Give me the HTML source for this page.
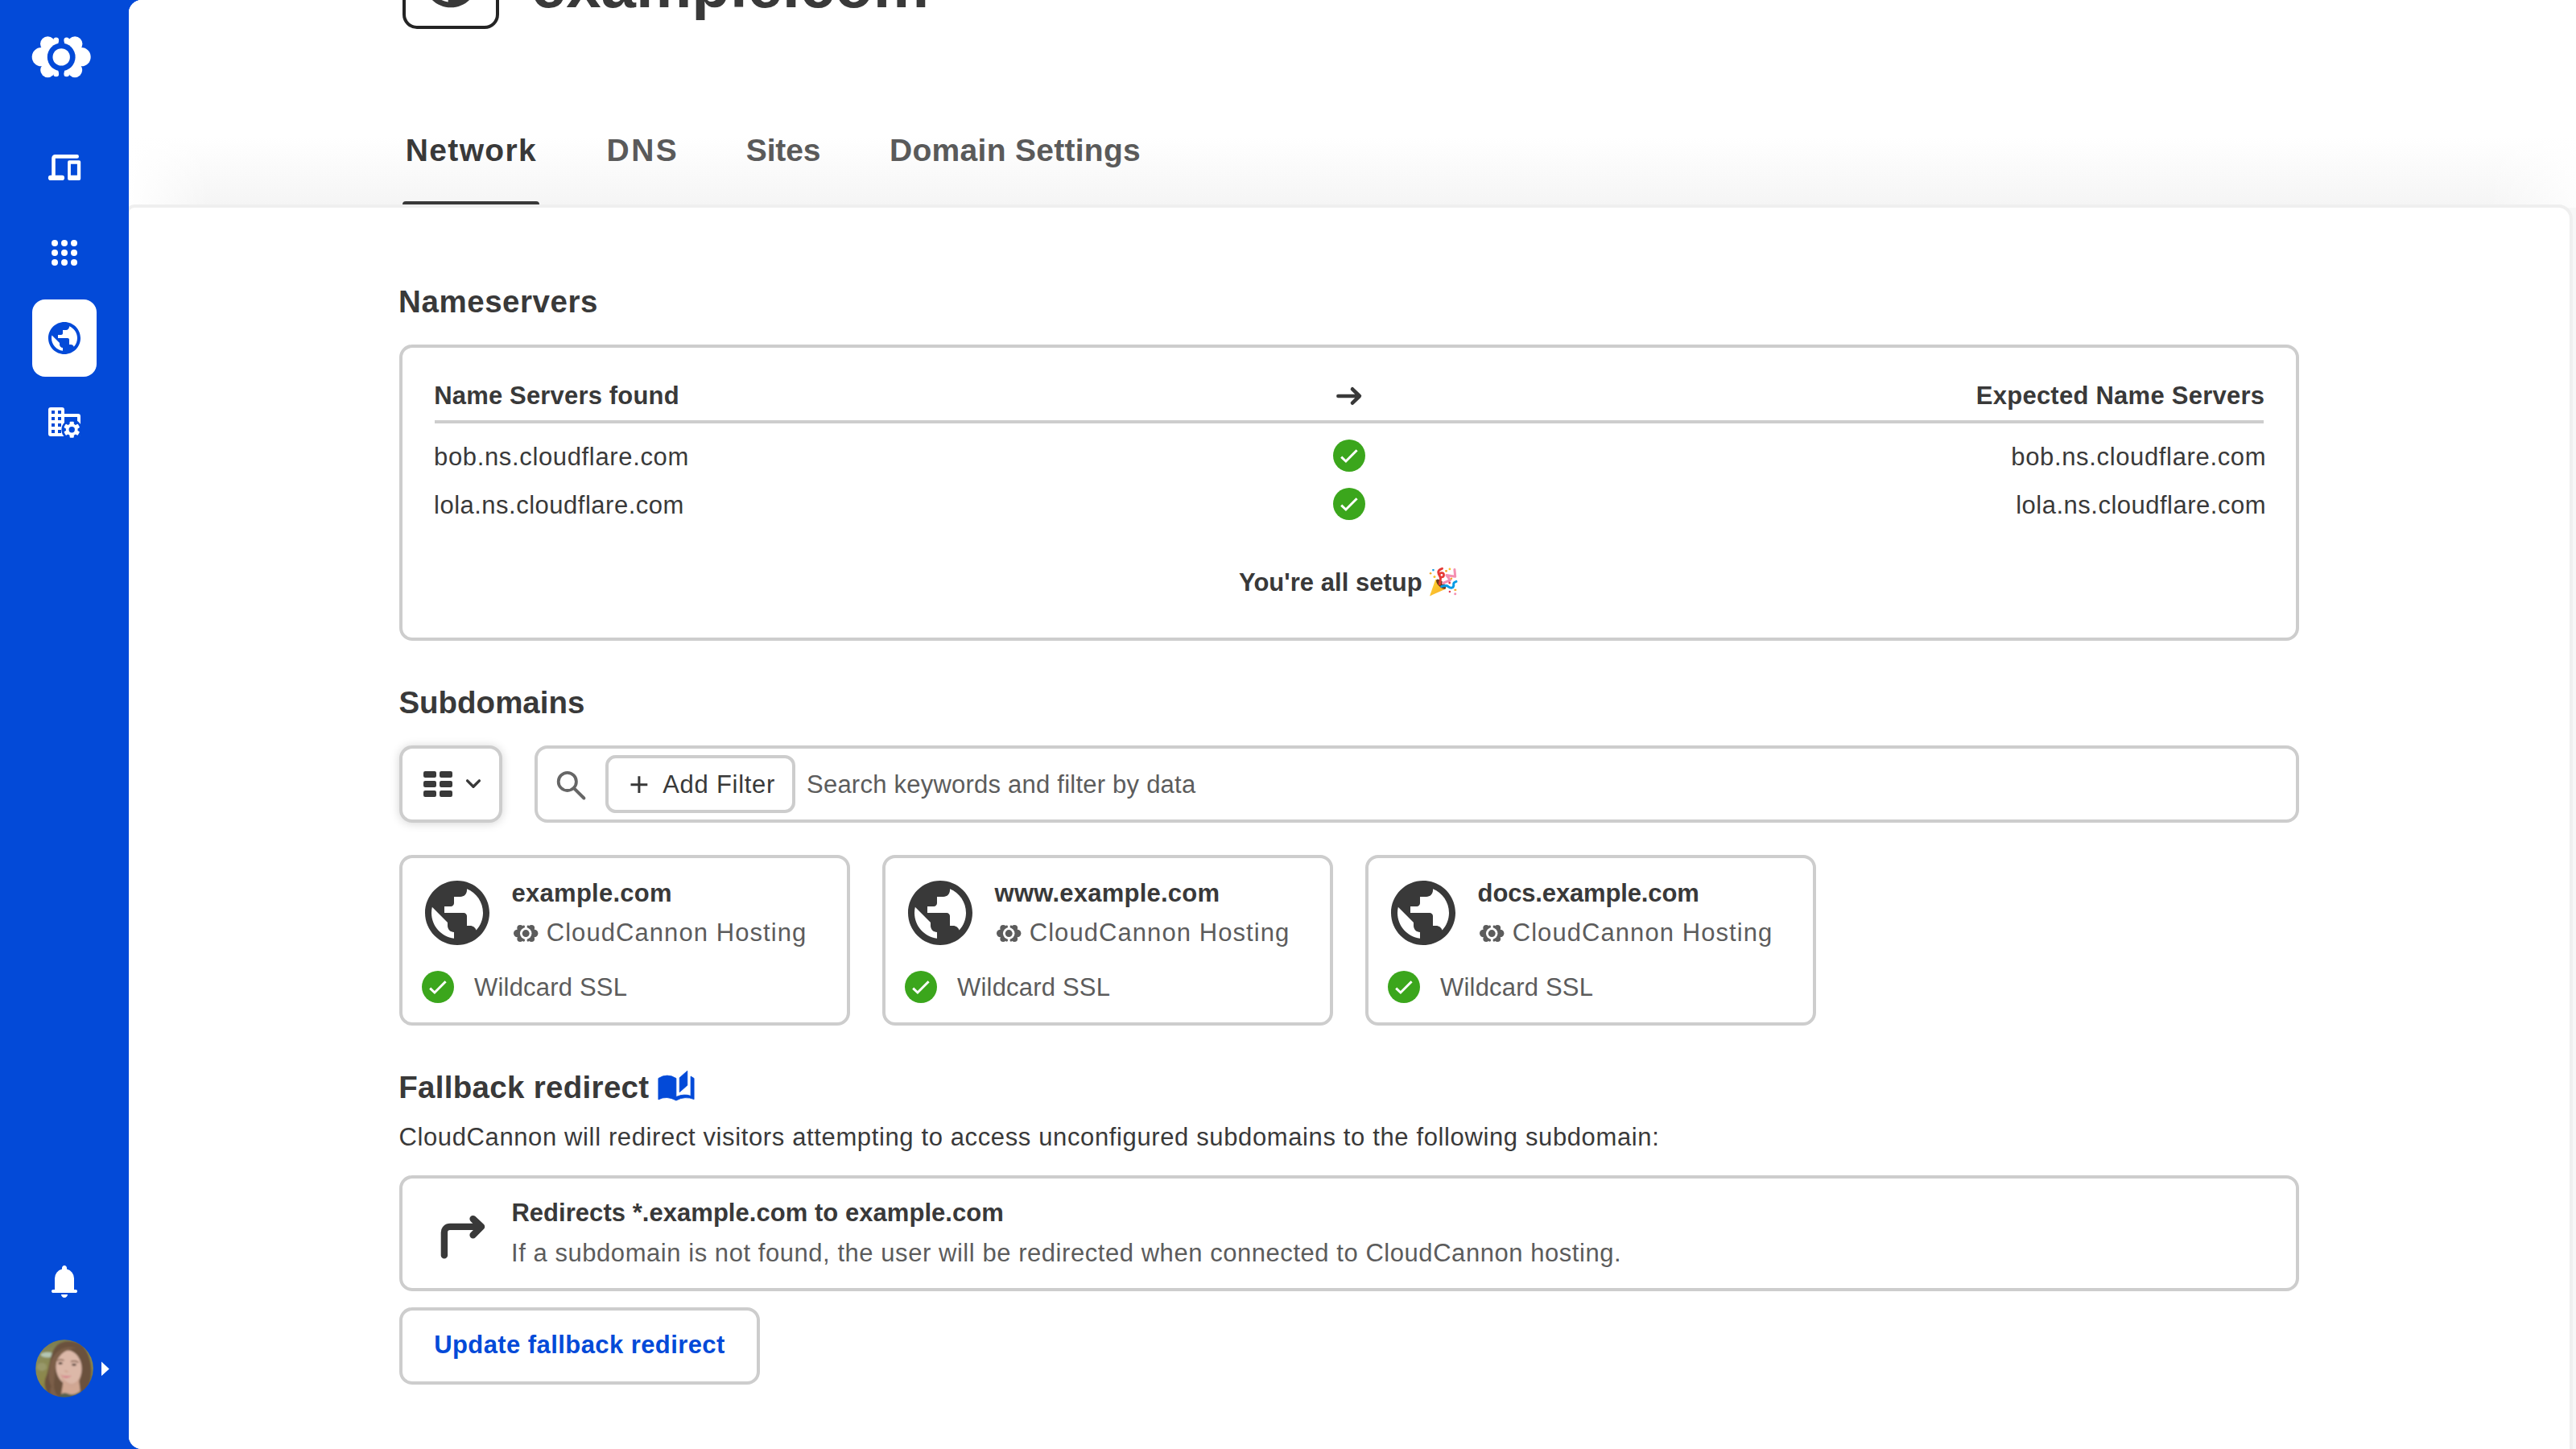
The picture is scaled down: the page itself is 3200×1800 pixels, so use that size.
<!DOCTYPE html>
<html lang="en">
<head>
<meta charset="utf-8">
<title>example.com - Network</title>
<style>
*{box-sizing:border-box;margin:0;padding:0}
html,body{width:3200px;height:1800px;overflow:hidden;background:#034ad8}
body{position:relative;font-family:"Liberation Sans",sans-serif;color:#393939;-webkit-font-smoothing:antialiased}
.abs{position:absolute}
.t{position:absolute;white-space:nowrap;line-height:1}
.b{font-weight:700}
svg{position:absolute;overflow:visible}
#side{position:absolute;left:0;top:0;width:160px;height:1800px;background:#034ad8}
#main{position:absolute;left:160px;top:0;width:3040px;height:1800px;background:#f7f7f7;border-radius:16px 0 0 16px;overflow:hidden}
#head{position:absolute;left:0;top:0;width:3040px;height:258px;background:linear-gradient(90deg,#fff 0,rgba(255,255,255,0) 100px,rgba(255,255,255,0) 2930px,rgba(255,255,255,.8) 3040px),linear-gradient(#fff 0,#fff 170px,#fbfbfb 205px,#f5f5f5 254px)}
#content{position:absolute;left:0;top:258px;width:3032px;height:1560px;background:#fff;border-radius:7px 14px 0 0;box-shadow:0 0 0 4px #efefef}
.box{position:absolute;border:4px solid #cdcdcd;border-radius:16px;background:#fff}
.g{color:#5c5c5c}
.h2{font-size:38.5px;font-weight:700}
.f{font-size:31px}
</style>
</head>
<body>
<div id="side"></div>
<div id="main">
<div id="head"></div>
<div id="content"></div>
</div>
<div id="page" class="abs" style="left:0;top:0;width:3200px;height:1800px">
<!-- logo -->
<svg style="left:36px;top:42px" width="80" height="58" viewBox="36 42 80 58">
<g fill="#fff">
<circle cx="51.3" cy="70.7" r="11.6"/><circle cx="59.3" cy="54.6" r="9.3"/><circle cx="59.3" cy="87.1" r="9.1"/>
<circle cx="69.7" cy="50.1" r="3.5"/><circle cx="69.7" cy="91.7" r="3.5"/>
<rect x="52" y="50" width="20.5" height="41.8"/>
<circle cx="101.1" cy="70.7" r="11.6"/><circle cx="93.1" cy="54.6" r="9.3"/><circle cx="93.1" cy="87.1" r="9.1"/>
<circle cx="82.7" cy="50.1" r="3.5"/><circle cx="82.7" cy="91.7" r="3.5"/>
<rect x="79.9" y="50" width="20.5" height="41.8"/>
</g>
<circle cx="76.2" cy="70.9" r="17.4" fill="#034ad8"/>
<rect x="73.2" y="44" width="6" height="54" fill="#034ad8"/>
<circle cx="76.2" cy="70.9" r="10.7" fill="#fff"/>
</svg>
<!-- devices -->
<svg style="left:56px;top:184px" width="48" height="48" viewBox="56 184 48 48">
<path d="M95.7 194.4H68.5a2 2 0 0 0-2 2V220" fill="none" stroke="#fff" stroke-width="4.6" stroke-linecap="round" stroke-linejoin="round"/>
<rect x="59.9" y="217.8" width="20.2" height="6.2" rx="3.1" fill="#fff"/>
<path fill="#fff" fill-rule="evenodd" d="M86.1 199.2h12.1a2 2 0 0 1 2 2V222a2 2 0 0 1-2 2H86.1a2 2 0 0 1-2-2v-20.8a2 2 0 0 1 2-2zM87.9 203.8v14h8v-14z"/>
</svg>
<!-- apps -->
<svg style="left:56px;top:290px" width="48" height="48" viewBox="56 290 48 48"><g fill="#fff">
<circle cx="68" cy="302" r="4"/><circle cx="80" cy="302" r="4"/><circle cx="92" cy="302" r="4"/>
<circle cx="68" cy="314" r="4"/><circle cx="80" cy="314" r="4"/><circle cx="92" cy="314" r="4"/>
<circle cx="68" cy="326" r="4"/><circle cx="80" cy="326" r="4"/><circle cx="92" cy="326" r="4"/></g></svg>
<!-- active globe -->
<div class="abs" style="left:40px;top:372px;width:80px;height:96px;background:#fff;border-radius:16px"></div>
<svg style="left:56px;top:396px" width="48" height="48" viewBox="0 0 24 24"><path fill="#034ad8" d="M12 2C6.480 2 2 6.480 2 12s4.480 10 10 10 10-4.480 10-10S17.520 2 12 2zm-1 17.930c-3.950-.49-7-3.850-7-7.930 0-.62.080-1.210.210-1.790L9 15v1c0 1.100.9 2 2 2v1.930zm6.900-2.540c-.26-.81-1-1.390-1.900-1.390h-1v-3c0-.55-.45-1-1-1H8v-2h2c.55 0 1-.45 1-1V7h2c1.100 0 2-.9 2-2v-.41c2.930 1.190 5 4.060 5 7.410 0 2.080-.8 3.970-2.100 5.390z"/></svg>
<!-- domain settings -->
<svg style="left:56px;top:500px" width="48" height="48" viewBox="0 0 24 24">
<path fill="#fff" fill-rule="evenodd" d="M3.500 3h7A1.500 1.500 0 0 1 12 4.500V7h8.500A1.500 1.500 0 0 1 22 8.500V19.500A1.500 1.500 0 0 1 20.500 21H3.500A1.500 1.500 0 0 1 2 19.500V4.500A1.500 1.500 0 0 1 3.500 3zM4 5v2h2V5zm4 0v2h2V5zM4 9v2h2V9zm4 0v2h2V9zM4 13v2h2v-2zm4 0v2h2v-2zM4 17v2h2v-2zm4 0v2h2v-2zM12 9v10h8V9z"/>
<circle cx="16.600" cy="16.850" r="6.400" fill="#034ad8"/>
<g transform="translate(16.600 16.850)" fill="#fff">
<rect x="-1.300" y="-5" width="2.600" height="10" rx=".5"/>
<rect x="-1.300" y="-5" width="2.600" height="10" rx=".5" transform="rotate(60)"/>
<rect x="-1.300" y="-5" width="2.600" height="10" rx=".5" transform="rotate(120)"/>
<circle r="3.700"/>
<circle r="1.850" fill="#034ad8"/>
</g>
</svg>
<!-- bell -->
<svg style="left:56px;top:1568px" width="48" height="48" viewBox="0 0 24 24"><path fill="#fff" d="M5 19q-.425 0-.712-.288T4 18t.288-.712T5 17h1v-7q0-2.075 1.250-3.687T10.500 4.200V3.500q0-.625.438-1.062T12 2t1.063.438T13.500 3.500v.7q2 .5 3.250 2.113T18 10v7h1q.425 0 .713.288T20 18t-.288.713T19 19zm7 3q-.825 0-1.412-.587T10 20h4q0 .825-.587 1.413T12 22"/></svg>
<!-- avatar -->
<svg style="left:44px;top:1664px" width="72" height="72" viewBox="0 0 72 72">
<defs><clipPath id="av"><circle cx="36" cy="36" r="35.800"/></clipPath>
<filter id="avb" x="-10%" y="-10%" width="120%" height="120%"><feGaussianBlur stdDeviation=".9"/></filter>
<linearGradient id="avbg" x1="0" y1="0" x2=".3" y2="1"><stop offset="0" stop-color="#6f6e46"/><stop offset=".35" stop-color="#8a8b5a"/><stop offset=".7" stop-color="#8d8748"/><stop offset="1" stop-color="#7d7440"/></linearGradient></defs>
<g clip-path="url(#av)"><g filter="url(#avb)">
<rect x="-4" y="-4" width="80" height="80" fill="url(#avbg)"/>
<ellipse cx="15" cy="19" rx="8.500" ry="3.300" fill="#b4c6b2"/>
<ellipse cx="8" cy="34" rx="6" ry="5" fill="#98986a"/>
<path d="M26 8C34 0 52 0 60 9c8 10 12 28 8 43-2 8-8 16-14 21H20C12 64 9 54 14 44c4-12 4-28 12-36z" fill="#6a513d"/>
<path d="M35 50h19l3 24H31z" fill="#d2a893"/>
<path d="M27 76c3-10 9-11 15-8 7 2 12-3 16-5l6 13z" fill="#55604f"/>
<ellipse cx="41.500" cy="35" rx="16" ry="21.500" transform="rotate(-7 41.500 35)" fill="#dcb8a8"/>
<path d="M30 40c3 8 8 14 15 15 6-1 10-6 12-13-2 10-6 16-12 17-8-1-13-9-15-19z" fill="#cfa693"/>
<path d="M51 11C40 11 29.500 17 25.800 29c-2 8-1.500 20-3.800 32-5-5-7-17-4-29C21 17 35 5 51 11z" fill="#7b5f49"/>
<path d="M51 11c7 3 10 14 10 27 0 10-2 20-6 28 9-6 15-20 13-36C66 16 59 8 51 11z" fill="#6a513d"/>
<path d="M20 58c-3 6-2 12 2 16h10c-5-4-9-9-9-18z" fill="#7b5f49"/>
<ellipse cx="31" cy="29.600" rx="2.700" ry="1.300" fill="#3b2a22"/><ellipse cx="48" cy="31.200" rx="2.900" ry="1.300" fill="#3b2a22"/>
<path d="M27.500 26.300q4-2.300 8-.3M44 27.500q5-2 9.500 1" stroke="#6a4a38" stroke-width="1.300" fill="none"/>
<path d="M36.500 38.500q1.500 2 4 1" stroke="#cfa08d" stroke-width="1.400" fill="none"/>
<path d="M31.500 44q6.500 2.200 13.500.7-6.500 7-13.500-.7z" fill="#d6868c"/>
</g></g></svg>
<svg style="left:124px;top:1688px" width="14" height="24" viewBox="124 1688 14 24"><path d="M126 1691.600v17.600l9.700-8.800z" fill="#fff"/></svg>

<div class="abs" style="left:500px;top:-84px;width:120px;height:120px;border:4px solid #242424;border-radius:18px;background:#fff"></div>
<svg style="left:520px;top:-64px" width="80" height="80" viewBox="0 0 24 24"><path fill="#393939" d="M12 2C6.480 2 2 6.480 2 12s4.480 10 10 10 10-4.480 10-10S17.520 2 12 2zm-1 17.930c-3.950-.49-7-3.850-7-7.930 0-.62.080-1.210.210-1.790L9 15v1c0 1.100.9 2 2 2v1.930zm6.900-2.540c-.26-.81-1-1.390-1.900-1.390h-1v-3c0-.55-.45-1-1-1H8v-2h2c.55 0 1-.45 1-1V7h2c1.100 0 2-.9 2-2v-.41c2.930 1.190 5 4.060 5 7.410 0 2.080-.8 3.970-2.100 5.390z"/></svg>
<div id="title" class="t b" style="left:659.8px;top:-57.2px;font-size:78px">example.com</div>
<div id="tab1" class="t b" style="left:503.8px;top:166.8px;font-size:39px;letter-spacing:1.35px">Network</div>
<div id="tab2" class="t b" style="left:753.5px;top:166.8px;font-size:39px;letter-spacing:2.5px;color:#5a5a5a">DNS</div>
<div id="tab3" class="t b" style="left:926.8px;top:166.8px;font-size:39px;letter-spacing:-.15px;color:#5a5a5a">Sites</div>
<div id="tab4" class="t b" style="left:1105px;top:166.8px;font-size:39px;letter-spacing:.29px;color:#5a5a5a">Domain Settings</div>
<div class="abs" style="left:500px;top:250px;width:170px;height:4px;background:#393939;border-radius:4px 4px 0 0"></div>

<div id="h_ns" class="t h2" style="left:495.1px;top:355.8px;letter-spacing:.55px">Nameservers</div>
<div class="box" style="left:496px;top:428px;width:2360px;height:368px"></div>
<div id="ns_l" class="t b f" style="left:539.2px;top:475.8px;letter-spacing:.17px">Name Servers found</div>
<svg style="left:1656px;top:476px" width="40" height="32" viewBox="1656 476 40 32"><path d="M1662.400 492h26.300M1680 483.300l8.900 8.700-8.900 8.700" fill="none" stroke="#393939" stroke-width="4.600" stroke-linecap="round" stroke-linejoin="round"/></svg>
<div id="ns_r" class="t b f" style="left:1813.3px;width:1000px;text-align:right;top:475.8px;letter-spacing:.25px">Expected Name Servers</div>
<div class="abs" style="left:540px;top:522px;width:2272px;height:4px;background:#cdcdcd"></div>
<div id="ns_a" class="t f" style="left:539px;top:551.8px;letter-spacing:.65px">bob.ns.cloudflare.com</div>
<div id="ns_b" class="t f" style="left:539px;top:611.8px;letter-spacing:.5px">lola.ns.cloudflare.com</div>
<div id="ns_c" class="t f" style="left:1815.2px;width:1000px;text-align:right;top:551.8px;letter-spacing:.65px">bob.ns.cloudflare.com</div>
<div id="ns_d" class="t f" style="left:1815px;width:1000px;text-align:right;top:611.8px;letter-spacing:.5px">lola.ns.cloudflare.com</div>
<svg style="left:1656px;top:546px" width="40" height="40" viewBox="-20 -20 40 40"><circle r="20" fill="#3ba61c"/><path d="M-9.800 1.700l5.700 5.300L9.600-6.800" fill="none" stroke="#fff" stroke-width="3"/></svg>
<svg style="left:1656px;top:606px" width="40" height="40" viewBox="-20 -20 40 40"><circle r="20" fill="#3ba61c"/><path d="M-9.800 1.700l5.700 5.300L9.600-6.800" fill="none" stroke="#fff" stroke-width="3"/></svg>
<div id="ns_ok" class="t b f" style="left:1539px;top:707.6px;letter-spacing:.03px">You're all setup</div>
<svg style="left:1775px;top:705px" width="36" height="36" viewBox="0 0 36 36" role="img" aria-label="party popper">
<defs><linearGradient id="pp" x1="0" y1="0" x2="1" y2="1"><stop offset="0" stop-color="#fdd835"/><stop offset="1" stop-color="#f9a825"/></linearGradient></defs>
<path d="M1 35.400L8.300 14.500 21.100 26.500z" fill="url(#pp)"/>
<ellipse cx="15.100" cy="20.700" rx="7.900" ry="3.400" transform="rotate(45 15.100 20.700)" fill="#6d3a1a"/>
<path d="M13.300 20.500c1-3.500 1.800-6 .8-9.500C11.500 8 9.500 3.500 16.500 1.300" fill="none" stroke="#e53935" stroke-width="2.900" stroke-linecap="round"/>
<circle cx="15.900" cy="9.300" r="2.700" fill="#fff" stroke="#e53935" stroke-width="2.600"/>
<path d="M17.400 19.500l9.100-3.800-4.600-6.200 10.800 1.700-.8-8.700" fill="none" stroke="#f48fb1" stroke-width="3" stroke-linecap="round" stroke-linejoin="round"/>
<path d="M15.700 23.600c3.500-1 5.800-2.200 8.300 0 2.500 2.200 6 2.500 6.700-.8.500-2.500-1.700-3.700 3.300-5.400" fill="none" stroke="#039be5" stroke-width="3" stroke-linecap="round"/>
<g fill="#1e9be0"><rect x="4.300" y="2" width="2.300" height="2.300"/></g>
<g fill="#f5a623"><circle cx="2.100" cy="7.200" r="1.300"/><circle cx="21.500" cy="4.300" r="1.400"/><circle cx="28" cy="13.700" r="1.200"/><rect x="31.400" y="26.800" width="2.800" height="2"/></g>
<g fill="#fbc02d"><circle cx="7" cy="11.400" r="1.500"/><circle cx="25.900" cy="1.900" r="1.400"/></g>
<g fill="#e53950"><circle cx="25.700" cy="19" r="1.400"/><circle cx="25.900" cy="30" r="1.300"/></g>
<circle cx="32.700" cy="32.700" r="1.500" fill="#f48fb1"/>
</svg>

<div id="h_sd" class="t h2" style="left:495.4px;top:853.9px">Subdomains</div>
<div class="box" style="left:496px;top:926px;width:128px;height:96px;box-shadow:0 1px 12px rgba(0,0,0,.17)"></div>
<svg style="left:520px;top:950px" width="90" height="48" viewBox="520 950 90 48"><g fill="#393939"><rect x="526" y="958" width="16" height="8" rx="2.200"/><rect x="526" y="970" width="16" height="8" rx="2.200"/><rect x="526" y="982" width="16" height="8" rx="2.200"/><rect x="546" y="958" width="16" height="8" rx="2.200"/><rect x="546" y="970" width="16" height="8" rx="2.200"/><rect x="546" y="982" width="16" height="8" rx="2.200"/></g><path d="M580.600 969.900l7.400 7.300 7.400-7.300" fill="none" stroke="#393939" stroke-width="3.400" stroke-linecap="round" stroke-linejoin="round"/></svg>
<div class="box" style="left:664px;top:926px;width:2192px;height:96px"></div>
<svg style="left:688px;top:954px" width="44" height="44" viewBox="688 954 44 44"><circle cx="704.800" cy="970.900" r="11.100" fill="none" stroke="#666" stroke-width="3.800"/><path d="M713.200 979.300l12.200 12.200" stroke="#666" stroke-width="4" stroke-linecap="round"/></svg>
<div class="box" style="left:752px;top:938px;width:236px;height:72px;border-radius:13px"></div>
<svg style="left:782px;top:963px" width="24" height="24" viewBox="782 963 24 24"><path d="M783.500 974.700h20.800M793.900 964.300v20.800" stroke="#393939" stroke-width="3" fill="none"/></svg>
<div id="addf" class="t f" style="left:823.2px;top:959.2px;letter-spacing:.73px">Add Filter</div>
<div id="ph" class="t f g" style="left:1002px;top:959.2px;letter-spacing:.23px">Search keywords and filter by data</div>
<div class="box" style="left:496px;top:1062px;width:560px;height:212px"></div>
<svg style="left:520px;top:1086px" width="96" height="96" viewBox="0 0 24 24"><path fill="#393939" d="M12 2C6.480 2 2 6.480 2 12s4.480 10 10 10 10-4.480 10-10S17.520 2 12 2zm-1 17.930c-3.950-.49-7-3.850-7-7.930 0-.62.080-1.210.210-1.790L9 15v1c0 1.100.9 2 2 2v1.930zm6.900-2.540c-.26-.81-1-1.390-1.900-1.390h-1v-3c0-.55-.45-1-1-1H8v-2h2c.55 0 1-.45 1-1V7h2c1.100 0 2-.9 2-2v-.41c2.930 1.190 5 4.060 5 7.410 0 2.080-.8 3.970-2.100 5.390z"/></svg>
<div id="c0t" class="t b f" style="left:635.6px;top:1093.9px;letter-spacing:.25px">example.com</div>
<svg style="left:638.4px;top:1149.3px" width="30.400" height="21" viewBox="39.700 45.500 72.900 50.400"><g fill="#5c5c5c"><circle cx="51.3" cy="70.7" r="11.6"/><circle cx="59.3" cy="54.6" r="9.3"/><circle cx="59.3" cy="87.1" r="9.1"/><circle cx="69.7" cy="50.1" r="3.5"/><circle cx="69.7" cy="91.7" r="3.5"/><rect x="52" y="50" width="20.5" height="41.8"/><circle cx="101.1" cy="70.7" r="11.6"/><circle cx="93.1" cy="54.6" r="9.3"/><circle cx="93.1" cy="87.1" r="9.1"/><circle cx="82.7" cy="50.1" r="3.5"/><circle cx="82.7" cy="91.7" r="3.5"/><rect x="79.900" y="50" width="20.5" height="41.8"/></g><circle cx="76.2" cy="70.9" r="17.4" fill="#fff"/><rect x="73.2" y="44" width="6" height="54" fill="#fff"/><circle cx="76.2" cy="70.9" r="10.7" fill="#5c5c5c"/></svg>
<div id="c0h" class="t f g" style="left:678.7px;top:1142.7px;letter-spacing:1.07px">CloudCannon Hosting</div>
<svg style="left:524px;top:1206px" width="40" height="40" viewBox="-20 -20 40 40"><circle r="20" fill="#3ba61c"/><path d="M-9.800 1.700l5.700 5.300L9.600-6.800" fill="none" stroke="#fff" stroke-width="3"/></svg>
<div id="c0s" class="t f g" style="left:589px;top:1211px;letter-spacing:.2px">Wildcard SSL</div>
<div class="box" style="left:1096px;top:1062px;width:560px;height:212px"></div>
<svg style="left:1120px;top:1086px" width="96" height="96" viewBox="0 0 24 24"><path fill="#393939" d="M12 2C6.480 2 2 6.480 2 12s4.480 10 10 10 10-4.480 10-10S17.520 2 12 2zm-1 17.930c-3.950-.49-7-3.850-7-7.930 0-.62.080-1.210.210-1.790L9 15v1c0 1.100.9 2 2 2v1.930zm6.900-2.540c-.26-.81-1-1.390-1.900-1.390h-1v-3c0-.55-.45-1-1-1H8v-2h2c.55 0 1-.45 1-1V7h2c1.100 0 2-.9 2-2v-.41c2.930 1.190 5 4.060 5 7.410 0 2.080-.8 3.970-2.100 5.390z"/></svg>
<div id="c1t" class="t b f" style="left:1235.6px;top:1093.9px;letter-spacing:.23px">www.example.com</div>
<svg style="left:1238.4px;top:1149.3px" width="30.400" height="21" viewBox="39.700 45.500 72.900 50.400"><g fill="#5c5c5c"><circle cx="51.3" cy="70.7" r="11.6"/><circle cx="59.3" cy="54.6" r="9.3"/><circle cx="59.3" cy="87.1" r="9.1"/><circle cx="69.7" cy="50.1" r="3.5"/><circle cx="69.7" cy="91.7" r="3.5"/><rect x="52" y="50" width="20.5" height="41.8"/><circle cx="101.1" cy="70.7" r="11.6"/><circle cx="93.1" cy="54.6" r="9.3"/><circle cx="93.1" cy="87.1" r="9.1"/><circle cx="82.7" cy="50.1" r="3.5"/><circle cx="82.7" cy="91.7" r="3.5"/><rect x="79.900" y="50" width="20.5" height="41.8"/></g><circle cx="76.2" cy="70.9" r="17.4" fill="#fff"/><rect x="73.2" y="44" width="6" height="54" fill="#fff"/><circle cx="76.2" cy="70.9" r="10.7" fill="#5c5c5c"/></svg>
<div id="c1h" class="t f g" style="left:1278.7px;top:1142.7px;letter-spacing:1.07px">CloudCannon Hosting</div>
<svg style="left:1124px;top:1206px" width="40" height="40" viewBox="-20 -20 40 40"><circle r="20" fill="#3ba61c"/><path d="M-9.800 1.700l5.700 5.300L9.600-6.800" fill="none" stroke="#fff" stroke-width="3"/></svg>
<div id="c1s" class="t f g" style="left:1189px;top:1211px;letter-spacing:.2px">Wildcard SSL</div>
<div class="box" style="left:1696px;top:1062px;width:560px;height:212px"></div>
<svg style="left:1720px;top:1086px" width="96" height="96" viewBox="0 0 24 24"><path fill="#393939" d="M12 2C6.480 2 2 6.480 2 12s4.480 10 10 10 10-4.480 10-10S17.520 2 12 2zm-1 17.930c-3.950-.49-7-3.850-7-7.930 0-.62.080-1.210.210-1.790L9 15v1c0 1.100.9 2 2 2v1.930zm6.900-2.540c-.26-.81-1-1.390-1.900-1.390h-1v-3c0-.55-.45-1-1-1H8v-2h2c.55 0 1-.45 1-1V7h2c1.100 0 2-.9 2-2v-.41c2.930 1.190 5 4.060 5 7.410 0 2.080-.8 3.970-2.100 5.390z"/></svg>
<div id="c2t" class="t b f" style="left:1835.6px;top:1093.9px;letter-spacing:-.15px">docs.example.com</div>
<svg style="left:1838.4px;top:1149.3px" width="30.400" height="21" viewBox="39.700 45.500 72.900 50.400"><g fill="#5c5c5c"><circle cx="51.3" cy="70.7" r="11.6"/><circle cx="59.3" cy="54.6" r="9.3"/><circle cx="59.3" cy="87.1" r="9.1"/><circle cx="69.7" cy="50.1" r="3.5"/><circle cx="69.7" cy="91.7" r="3.5"/><rect x="52" y="50" width="20.5" height="41.8"/><circle cx="101.1" cy="70.7" r="11.6"/><circle cx="93.1" cy="54.6" r="9.3"/><circle cx="93.1" cy="87.1" r="9.1"/><circle cx="82.7" cy="50.1" r="3.5"/><circle cx="82.7" cy="91.7" r="3.5"/><rect x="79.900" y="50" width="20.5" height="41.8"/></g><circle cx="76.2" cy="70.9" r="17.4" fill="#fff"/><rect x="73.2" y="44" width="6" height="54" fill="#fff"/><circle cx="76.2" cy="70.9" r="10.7" fill="#5c5c5c"/></svg>
<div id="c2h" class="t f g" style="left:1878.7px;top:1142.7px;letter-spacing:1.07px">CloudCannon Hosting</div>
<svg style="left:1724px;top:1206px" width="40" height="40" viewBox="-20 -20 40 40"><circle r="20" fill="#3ba61c"/><path d="M-9.800 1.700l5.700 5.300L9.600-6.800" fill="none" stroke="#fff" stroke-width="3"/></svg>
<div id="c2s" class="t f g" style="left:1789px;top:1211px;letter-spacing:.2px">Wildcard SSL</div>

<div id="h_fb" class="t h2" style="left:495.2px;top:1331.7px;letter-spacing:.31px">Fallback redirect</div>
<svg style="left:816px;top:1328px" width="48" height="42" viewBox="816 1328 48 42"><g fill="#034ad8" stroke="#034ad8" stroke-width=".8" stroke-linejoin="round">
<path d="M817.900 1339.500Q828.700 1332.700 839.900 1339.500V1367Q828 1360.500 817.900 1365.900z"/>
<path d="M858.100 1337L862.100 1339.500V1365.600Q851 1361 839.900 1367V1362.500Q850 1358.250 858.100 1361.400z"/>
<path d="M844.200 1338.800L853.800 1330.300V1348.200L844.200 1356.700z"/>
</g></svg>
<div id="fb_p" class="t f" style="left:495.4px;top:1397.400px;letter-spacing:.625px">CloudCannon will redirect visitors attempting to access unconfigured subdomains to the following subdomain:</div>
<div class="box" style="left:496px;top:1460px;width:2360px;height:144px"></div>
<svg style="left:540px;top:1500px" width="72" height="72" viewBox="540 1500 72 72"><path d="M551.900 1559.400V1530.900a7 7 0 0 1 7-7H597.500M587.600 1514.100l10.400 9.800-10.400 10.400" fill="none" stroke="#393939" stroke-width="8.400" stroke-linecap="round" stroke-linejoin="round"/></svg>
<div id="fb_t" class="t b f" style="left:635.4px;top:1491.400px;letter-spacing:.04px">Redirects *.example.com to example.com</div>
<div id="fb_d" class="t f g" style="left:635px;top:1541.100px;letter-spacing:.55px">If a subdomain is not found, the user will be redirected when connected to CloudCannon hosting.</div>
<div class="box" style="left:496px;top:1624px;width:448px;height:96px"></div>
<div id="fb_b" class="t b f" style="left:539.2px;top:1655.400px;letter-spacing:.42px;color:#034ad8">Update fallback redirect</div>

</div>
</body>
</html>
